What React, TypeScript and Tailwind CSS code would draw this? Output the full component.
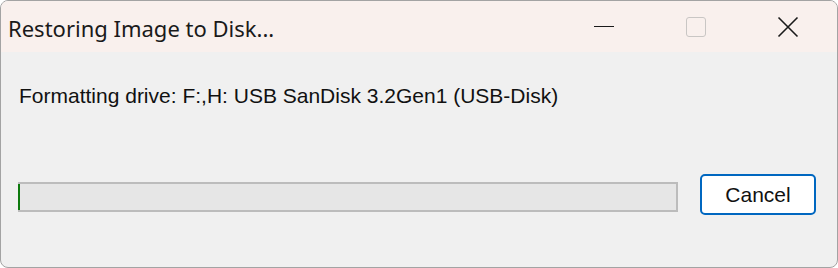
import React from "react";

export default function App() {
  return (
    <div className="w-[838px] h-[268px] bg-white">
      <div className="w-[838px] h-[268px] rounded-[8px] border border-[#a3a3a3] overflow-hidden flex flex-col bg-[#f0f0f0]">
        <div className="h-[51px] bg-[#f9f0ed] flex items-center pl-[7px] pr-[3px] shrink-0">
          <div
            className="flex-1 text-[22px] text-[#1a1a1a] pt-[4px]"
            style={{ fontFamily: '"Segoe UI", "Noto Sans", "Open Sans", sans-serif' }}
          >
            Restoring Image to Disk...
          </div>
          <div className="flex h-full">
            <div className="w-[92px] h-full flex items-center justify-center">
              <div className="w-[20px] h-[1.5px] bg-[#1a1a1a]" />
            </div>
            <div className="w-[92px] h-full flex items-center justify-center">
              <div className="w-[20px] h-[20px] rounded-[3px] border-[1.5px] border-[#c9c6c4]" />
            </div>
            <div className="w-[92px] h-full flex items-center justify-center">
              <svg width="22" height="22" viewBox="0 0 22 22">
                <path d="M1.5 1.5 L20.5 20.5 M20.5 1.5 L1.5 20.5" stroke="#1a1a1a" strokeWidth="1.6" />
              </svg>
            </div>
          </div>
        </div>
        <div
          className="flex-1 flex flex-col px-[17px]"
          style={{ fontFamily: '"Liberation Sans", Arial, sans-serif' }}
        >
          <div className="mt-[32px] text-[21px] leading-[24px] text-[#111] pl-[1px]">
            Formatting drive: F:,H: USB SanDisk 3.2Gen1 (USB-Disk)
          </div>
          <div className="mt-[66px] flex items-start">
            <div className="mt-[8px] w-[660px] h-[30px] bg-[#bcbcbc] py-[2px] pr-[2px] flex">
              <div className="w-[2px] h-full bg-[#0e7a0e]" />
              <div className="flex-1 h-full bg-[#e6e6e6]" />
            </div>
            <button className="ml-[22px] w-[116px] h-[41px] rounded-[5px] border-2 border-[#0067c0] bg-white text-[21px] text-[#111] flex items-center justify-center">
              Cancel
            </button>
          </div>
        </div>
      </div>
    </div>
  );
}
